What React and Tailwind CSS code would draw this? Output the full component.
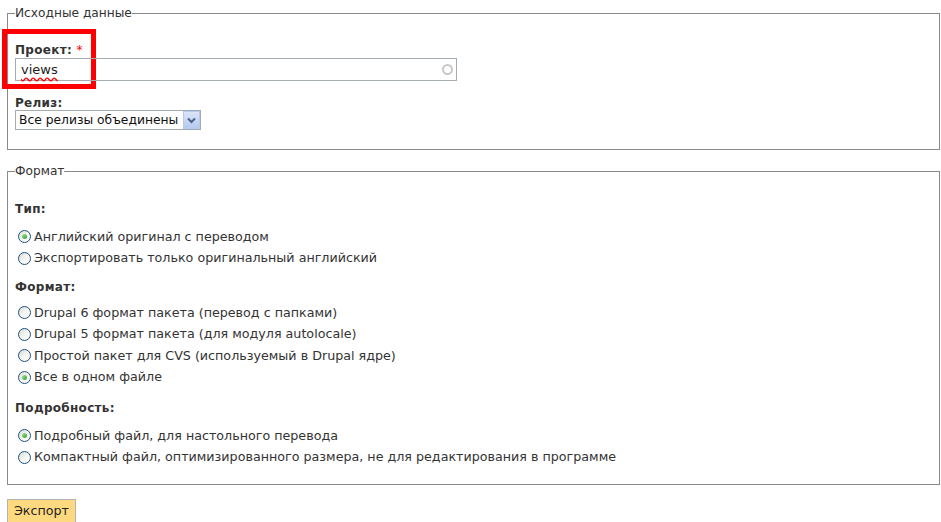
import React, { useState } from 'react';

const Radio = ({ checked, label, onChange }) => (
  <label className="flex items-center h-[21.5px] cursor-pointer" onClick={onChange}>
    <span className="ml-[3px] mr-[3px] w-[13px] h-[13px] rounded-full border border-[#1c5180] bg-gradient-to-br from-[#dcdcd6] via-[#f4f4f0] to-white flex items-center justify-center shrink-0">
      {checked && <span className="w-[5px] h-[5px] rounded-full bg-gradient-to-br from-[#a0e39a] to-[#21a121]" />}
    </span>
    <span className="text-[12.7px] leading-[16px] whitespace-nowrap">{label}</span>
  </label>
);

const Label = ({ children }) => (
  <div className="font-bold text-[#333] leading-[14px] tracking-[0.3px]">{children}</div>
);

const App = () => {
  const [type, setType] = useState(0);
  const [format, setFormat] = useState(3);
  const [detail, setDetail] = useState(0);

  const types = ['Английский оригинал с переводом', 'Экспортировать только оригинальный английский'];
  const formats = [
    'Drupal 6 формат пакета (перевод с папками)',
    'Drupal 5 формат пакета (для модуля autolocale)',
    'Простой пакет для CVS (используемый в Drupal ядре)',
    'Все в одном файле',
  ];
  const details = [
    'Подробный файл, для настольного перевода',
    'Компактный файл, оптимизированного размера, не для редактирования в программе',
  ];

  return (
    <div className="min-h-screen bg-white text-[12px] text-[#333] pl-[7px] pr-[1px] pt-[6px]" style={{ fontFamily: '"DejaVu Sans", Verdana, sans-serif' }}>
      <fieldset className="border border-[#8a8a8a] px-[7px] pb-[19px] relative">
        <legend className="leading-[14px] text-[12.2px]">Исходные данные</legend>
        <div className="mt-[23px] relative">
          <div className="absolute -left-[13px] -top-[14px] w-[94px] h-[60px] border-[5px] border-[#f00] pointer-events-none" />
          <Label>
            Проект: <span className="text-[#f00] font-normal">*</span>
          </Label>
          <div className="mt-[1px] w-[442px] h-[23px] border border-[#a5acb2] flex items-center pl-[5px] relative">
            <span className="text-[13px] text-[#222] underline decoration-wavy decoration-[#f00] underline-offset-[3px]">views</span>
            <span className="absolute right-[3px] top-[5px] w-[11px] h-[11px] rounded-full border-2 border-[#c8c8c8]" />
          </div>
        </div>
        <div className="mt-[15px]">
          <Label>Релиз:</Label>
          <div className="w-[186px] h-[20px] border border-[#a5acb2] flex items-center">
            <span className="flex-1 pl-[3px] text-[12.3px] text-[#111] whitespace-nowrap overflow-hidden">Все релизы объединены</span>
            <span className="w-[17px] h-[18px] bg-gradient-to-b from-[#dbe5f8] to-[#b6c9ee] border border-[#b4c8f0] flex items-center justify-center">
              <svg width="9" height="7" viewBox="0 0 9 7">
                <path d="M1 1.5 L4.5 5 L8 1.5" stroke="#4d6185" strokeWidth="2" fill="none" />
              </svg>
            </span>
          </div>
        </div>
      </fieldset>

      <fieldset className="mt-[14px] border border-[#8a8a8a] px-[7px] pb-[16px]">
        <legend className="leading-[14px] text-[12.2px]">Формат</legend>
        <div className="mt-[24px]">
          <Label>Тип:</Label>
          <div className="mt-[10px]">
            {types.map((t, i) => (
              <Radio key={t} label={t} checked={type === i} onChange={() => setType(i)} />
            ))}
          </div>
        </div>
        <div className="mt-[11px]">
          <Label>Формат:</Label>
          <div className="mt-[8px]">
            {formats.map((t, i) => (
              <Radio key={t} label={t} checked={format === i} onChange={() => setFormat(i)} />
            ))}
          </div>
        </div>
        <div className="mt-[13px]">
          <Label>Подробность:</Label>
          <div className="mt-[10px]">
            {details.map((t, i) => (
              <Radio key={t} label={t} checked={detail === i} onChange={() => setDetail(i)} />
            ))}
          </div>
        </div>
      </fieldset>

      <button className="mt-[14px] h-[24px] w-[69px] bg-[#ffd97f] border border-[#b3b3b3] text-[12.7px] text-[#222] leading-[16px]">
        Экспорт
      </button>
    </div>
  );
};

export default App;
